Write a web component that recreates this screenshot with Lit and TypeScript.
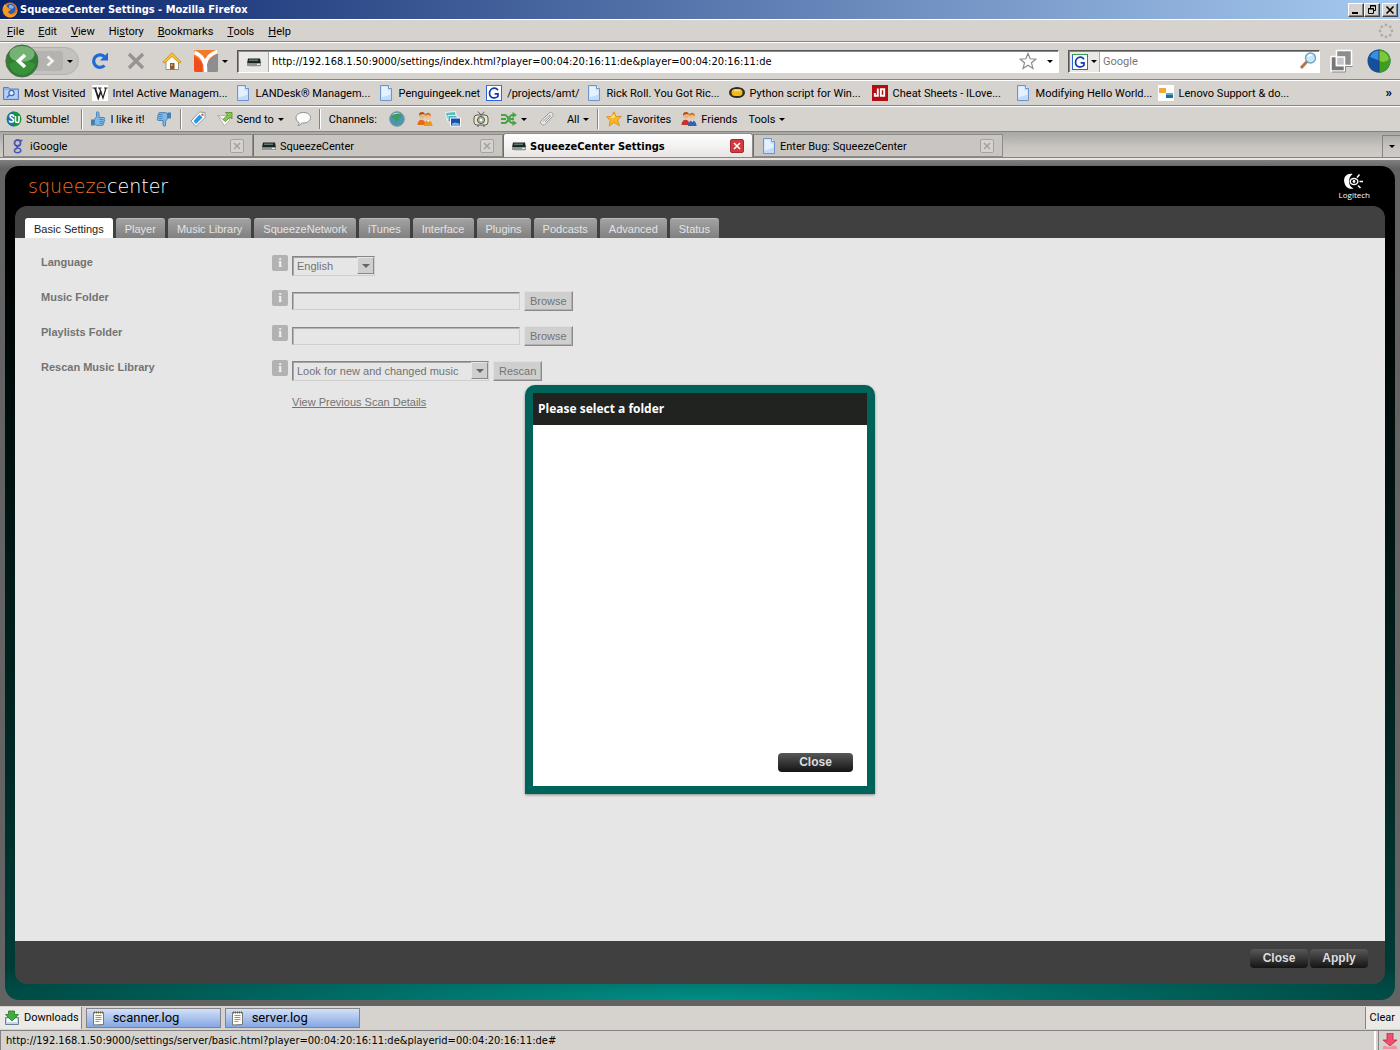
import { LitElement, html, css, svg, nothing, TemplateResult } from "lit";
import { customElement, state } from "lit/decorators.js";
import { classMap } from "lit/directives/class-map.js";

const box = (size: number, view: string, body: unknown) =>
  html`<svg width=${size} height=${size} viewBox=${view} aria-hidden="true">${body}</svg>`;
const i16 = (body: unknown) => box(16, "0 0 16 16", body);

const pageIcon = i16(svg`
  <path d="M2.500 .5h8l3 3v12h-11z" fill="#c3dbfa" stroke="#6f93cc"/>
  <path d="M3.500 1.500h6v4h3v4l-9 3z" fill="#e6f1fe"/>
  <path d="M10.500 .5v3h3" fill="#fff" stroke="#6f93cc"/>`);
const deviceIcon = i16(svg`
  <path d="M2 4.500h12l1 5H1z" fill="#1d2422"/><path d="M3 5.500h9v1.500H3z" fill="#5d7c74"/>
  <path d="M1 9.500h14v2.500H1z" fill="#8f9391"/><path d="M3 12h11v1H3z" fill="#cfcfcf"/>
  <path d="M11 10.300h3" stroke="#fff"/>`);
const gIcon = i16(svg`
  <path d="M0 0h16v16H0z" fill="#fff"/>
  <path d="M.5 16V.5" stroke="#2b62d6" /><path d="M0 .5h16" stroke="#2fa04a"/>
  <path d="M15.500 0v16" stroke="#d23a2e"/><path d="M0 15.500h16" stroke="#2b62d6"/>
  <path d="M12 5.200C10.500 2.800 7 2.500 5 4.500s-2 5.500 0 7.300 5.500 1.200 7-.6V8.800H8.600" fill="none" stroke="#1338b0" stroke-width="1.700"/>`);
const people = (a: string, b: string) => i16(svg`
  <circle cx="5" cy="4.500" r="3" fill="#f2b27a"/><path d="M2 4.500C1.500 0 8 0 8 3.500 6 2.500 4 3 2 4.500z" fill="#a4521b"/>
  <circle cx="11" cy="5" r="3" fill="#f5bd87"/><path d="M8 5C8 .5 14 .5 14 5 12 3.500 10 3.500 8 5z" fill="#c8772a"/>
  <path d="M.5 14c0-7 8-7 8 0z" fill=${a}/><path d="M7 15c0-7.500 8.500-7.500 8.500 0z" fill=${b}/>
  <path d="M10 9.200l1.300 2 1.300-2z" fill="#fff"/>`);
const thumb = svg`
  <path d="M1 8.500h3.500v6H1z" fill="#3f80b8"/>
  <path d="M4.500 8.500L6.500 5.500V1.500C6.500 .3 9 .5 9 2.500V6.500h4.500c1.500 0 1.500 1.700.5 2 1 .4.800 1.800-.2 2 .8.500.5 1.700-.5 1.900.6.700.2 2-1 2H6.500l-2-1z" fill="#7db9e3" stroke="#3873aa" stroke-width=".8"/>
  <path d="M9.500 8.500h4M9.500 10.500h4M9.500 12.400h3.500" stroke="#3873aa" stroke-width=".7"/>`;
const noteIcon = i16(svg`
  <path d="M2.500 2.500h10v12l-10 .5z" fill="#fffef4" stroke="#777"/>
  <path d="M3 2.500h10" stroke="#6b5a32" stroke-width="2" stroke-dasharray="1 1"/>
  <path d="M4.500 5.500h6M4.500 7.500h6M4.500 9.500h6M4.500 11.500h4" stroke="#777" stroke-width=".8"/>`);

const icons: Record<string, TemplateResult> = {
  page: pageIcon,
  device: deviceIcon,
  g: gIcon,
  note: noteIcon,
  firefox: i16(svg`
    <circle cx="8" cy="8" r="7.500" fill="#e8731a"/><circle cx="8.500" cy="7" r="5" fill="#2c5fb4"/>
    <path d="M7 3.500c2-1 4 0 5 1.500l-2 2-3-1z" fill="#7cb2ea"/>
    <path d="M1 5C0 9 2 14.500 8 15.500c4.500 0 7.500-3.500 7.500-8-1 4-3 5-5.500 5-3 0-4-2-3.500-3.500l2.500-1c-.5-2-3.500-1-4-4z" fill="#f39a22"/>
    <path d="M1.300 5L3 2l1 2.500" fill="#f7c341"/>`),
  visited: i16(svg`
    <path d="M.5 2.500h5l1 1.500h9v10.500H.5z" fill="#8fb5ee" stroke="#5580c0"/>
    <path d="M1.500 5h13v8.500h-13z" fill="#b4d0f6"/>
    <circle cx="8.500" cy="8" r="2.600" fill="#e2eefd" stroke="#3f6cb4" stroke-width="1.200"/><path d="M6.500 10l-2.500 2.500" stroke="#3f6cb4" stroke-width="1.400"/>`),
  wiki: i16(svg`<path d="M0 0h16v16H0z" fill="#fff"/>
    <path d="M3 3l3.300 10L9 6" fill="none" stroke="#222" stroke-width="1.800"/>
    <path d="M7.500 3L11 13l3-10M.5 3h4.500M6 3h3.500M12 3h3.500" fill="none" stroke="#222" stroke-width="1.200"/>`),
  python: i16(svg`<ellipse cx="8" cy="7.500" rx="8" ry="5.600" fill="#2c2c22"/>
    <rect x="2.500" y="4" width="11" height="7" rx="3.500" fill="#f3b81a"/><path d="M5 5.500h6" stroke="#ffe37c" stroke-width="1.500"/>`),
  jd: i16(svg`<path d="M0 0h16v16H0z" fill="#b20d12"/>
    <path d="M5.800 3.500v7.200H2.800V8M8.800 4.300h3.400v6.400H8.800z" fill="none" stroke="#fff" stroke-width="1.900"/>`),
  lenovo: i16(svg`<path d="M0 0h16v16H0z" fill="#fff"/><path d="M1 3h7v5H1z" fill="#f2a93a"/><path d="M8 8h7v5H8z" fill="#176f9c"/><path d="M8 8h7v2H8z" fill="#5fa9c8"/>`),
  stumble: i16(svg`<circle cx="8" cy="8" r="7.500" fill="#17943a"/><path d="M1 8a7 7 0 0 1 7-7.500v15A7 7 0 0 1 1 8z" fill="#1d6fb8"/>
    <path d="M7.500 6V5c0-1.500-3.500-1.500-3.500.3C4 7.500 7.500 7 7.500 9.500c0 2-4 2-4 0M9.500 5v5c0 2 3.500 2 3.500 0V5" fill="none" stroke="#fff" stroke-width="1.600"/>`),
  up: i16(thumb),
  down: i16(svg`<g transform="rotate(180 8 8)">${thumb}</g>`),
  tag: i16(svg`<path d="M1 10L9.500 1l5.500.5v5L6 15.500z" fill="#fff" stroke="#8899a8"/><path d="M3.500 10l6-6.500 3 3-6.500 6.500z" fill="#2f95dc"/><circle cx="12.500" cy="3.700" r="1.200" fill="#d2692a"/>`),
  send: i16(svg`<path d="M.5 4.500h12v5l-5 5.500z" fill="#f6f6f0" stroke="#b5b5a8"/><path d="M1 5l6 4 5-4" fill="none" stroke="#b5b5a8"/>
    <path d="M6 8.500L10.500 4 8.500 1.500h6.500V8l-2-2-4.500 4.500z" fill="#8cc252" stroke="#4d8d22" stroke-width=".8"/>`),
  bubble: i16(svg`<path d="M8.500 1.500c4 0 7 2.200 7 5.200s-3 5.300-7 5.300c-.7 0-1.500 0-2 .2-.5 1.300-2 2.300-3.500 2.300 1-.8 1.200-2 1-3C2.300 10.500 1 8.800 1 6.700c0-3 3.500-5.200 7.500-5.200z" fill="#fcfcfc" stroke="#8d8d8d"/>`),
  globe: i16(svg`<circle cx="8" cy="8" r="7.300" fill="#4a97b5" stroke="#7e949c"/><path d="M3 5c2-3 5-3.500 8-2.500l1.500 3L10 7l-1 3-2 2-1-4-3-1z" fill="#3e9b62"/><path d="M3 4c2-2.500 6-3 8-1.500-3-.3-6 .2-8 1.500z" fill="#dff1f6"/>`),
  peopleOrange: people("#e06c1c", "#f29422"),
  peopleBlue: people("#c8342c", "#2b64b8"),
  photos: i16(svg`<path d="M.5 1.500l10-1 .8 7-9.500 1z" fill="#59bdb8" stroke="#fff" stroke-width=".8"/><path d="M3 4.500h9V11H3z" fill="#4aa9cf" stroke="#fff" stroke-width=".8"/><path d="M5.500 7h10v8h-10z" fill="#1c4fa4" stroke="#fff"/><path d="M7 12.500l3-1 4.500 1v1.500H7z" fill="#78b3ea"/>`),
  tv: i16(svg`<path d="M5 .5L8 4l3.500-3" fill="none" stroke="#555"/><rect x="1" y="4" width="14" height="10" rx="3" fill="#e9e6cf" stroke="#5d5b4c"/><circle cx="8" cy="9" r="3.600" fill="#a7b7aa" stroke="#5d5b4c"/><circle cx="8" cy="9" r="1.300" fill="#fff"/><path d="M4 15h2M10 15h2" stroke="#555"/>`),
  shuffle: i16(svg`<path d="M0 4h4c3 0 4 8 7 8h1M0 8h5M9 8h4M0 12h4c3 0 4-8 7-8h1" fill="none" stroke="#49a447" stroke-width="2.200"/><path d="M11.500 1l4.500 3-4.500 3zM11.500 9l4.500 3-4.500 3z" fill="#49a447"/>`),
  clip: i16(svg`<path d="M1.500 10.500L10 2c2-2 5.500 1 3.500 3.500L6.500 13c-2 2-5 .5-5-2.500z" fill="#e9e9e9" stroke="#9a9a9a"/><path d="M4 10.500l6-6c1-.8 2 .3 1.200 1.200L6 11" fill="none" stroke="#9a9a9a"/>`),
  star: i16(svg`<path d="M8 .8l2 4.700 5.500-.2-4 3.700 2 5.700L8 11.500 3.200 15l1-5.500L.6 5.800l5-.3z" fill="#fbb724" stroke="#d98712" stroke-width=".8"/><path d="M8 3l1.200 3.500-5 .3z" fill="#ffe48a"/>`),
  google: i16(svg`<circle cx="6.500" cy="5" r="3" fill="none" stroke="#4a56b4" stroke-width="1.800"/><path d="M9 2.500h2.500M7 8c-3 .2-1 2 .5 2.300 3.500.5 3 4.400-.8 4.400-4.300 0-4.300-3.700-.6-4.200" fill="none" stroke="#4a56b4" stroke-width="1.500"/>`),
  dl: i16(svg`<path d="M1.500 7.500h13v7h-13z" fill="#c9d6e6" stroke="#6c7f98"/><path d="M3 9h10v3H3z" fill="#f4f7fb"/><path d="M4.500 1h6v3.500h4L8 11 1.500 4.500h3z" fill="#3fae3d" stroke="#1f7c22" stroke-width=".8"/>`),
  reload: box(20, "0 0 20 20", svg`<path d="M14.500 14.500A6.300 6.300 0 1 1 14.200 5.500" fill="none" stroke="#2468d4" stroke-width="3.200"/><path d="M18 1.500v8h-8z" fill="#2468d4"/>`),
  stop: box(20, "0 0 20 20", svg`<path d="M3 3l14 14M17 3L3 17" stroke="#969492" stroke-width="3.400"/>`),
  home: box(20, "0 0 20 20", svg`<path d="M4 10v8.500h12.500V10L10 4z" fill="#fff" stroke="#9a9384"/><path d="M.8 11L10 1.800 19.200 11l-2 .9L10 5.500 2.800 12z" fill="#f8c435" stroke="#c98d17" stroke-width=".9"/><path d="M8 12h4.500v6.500H8z" fill="#94592b"/><path d="M9 13h1.500v2H9z" fill="#dfa868"/>`),
  yoono: box(24, "0 0 24 24", svg`<rect width="24" height="22" y="1" rx="2" fill="#f3792b"/><path d="M12 23V14L24 3v18q0 2-2 2z" fill="#8e8e90"/><path d="M0 7l9 7-1 9H2q-2 0-2-2z" fill="#f04d1a"/><path d="M.5 3.500C6 5.500 12 10 11.500 23M23.500 2.500C17 4.500 12 9 11 16" fill="none" stroke="#fff" stroke-width="3.600"/>`),
  search: box(18, "0 0 18 18", svg`<circle cx="11.500" cy="6" r="5" fill="#c8e8fa" stroke="#6fa2c8" stroke-width="1.400"/><path d="M9 5a3 3 0 0 1 4-2" fill="none" stroke="#fff" stroke-width="1.500"/><path d="M8 9.500L2 16" stroke="#b5754a" stroke-width="3"/>`),
  bookmark: box(18, "0 0 18 18", svg`<path d="M9 1.500l2.200 5.300 5.600.4-4.300 3.600 1.400 5.600L9 13.300l-4.900 3.100 1.400-5.600L1.200 7.200l5.600-.4z" fill="#fdfdfd" stroke="#8a8a8a" stroke-width="1.200"/>`),
  windows: box(24, "0 0 24 24", svg`<path d="M2 7.500h13.500V22H2z" fill="#777" stroke="#fff" stroke-width="1.500"/><path d="M7.500 1.500h15v15h-15z" fill="#8d8d8d" stroke="#fff" stroke-width="1.500"/><path d="M7.500 8h8v8.500h-8z" fill="#c4c4c4" stroke="#fff" stroke-width="1.500"/><path d="M23.500 17.500H16.500V23H3" fill="none" stroke="#777" stroke-width=".8"/>`),
  orb: box(24, "0 0 24 24", svg`<circle cx="12" cy="12" r="11.500" fill="#164f9e"/><path d="M12 .5a11.500 11.500 0 0 1 0 23z" fill="#3e9e22"/><path d="M3 8c2-5 5-6 9-6.500v10z" fill="#3a8fdc"/><path d="M12 2c6 0 9 4 10 8-4 4-7 3-10 2z" fill="#7cc836"/><path d="M12 .5v23" stroke="#143a5a" stroke-width=".8"/>`),
  throbber: i16(svg`<g fill="#aeaba6"><circle cx="8" cy="2" r="1.400"/><circle cx="12.200" cy="3.800" r="1.400"/><circle cx="14" cy="8" r="1.400"/><circle cx="12.200" cy="12.200" r="1.400"/><circle cx="8" cy="14" r="1.400"/><circle cx="3.800" cy="12.200" r="1.400"/><circle cx="2" cy="8" r="1.400"/><circle cx="3.800" cy="3.800" r="1.400"/></g>`),
  back: box(34, "0 0 34 34", svg`<circle cx="17" cy="17" r="16" fill="#2f7d32" stroke="#4b6b4c"/><ellipse cx="17" cy="10" rx="12.500" ry="8" fill="#8cc48c" opacity=".75"/><path d="M4 20c6-4 20-4 26 0-2 7-7 11-13 11S6 27 4 20z" fill="#3fa03f" opacity=".6"/><path d="M20 11l-6.500 6 6.500 6" fill="none" stroke="#fff" stroke-width="3.600"/>`),
  fwd: i16(svg`<path d="M5.500 3.500L10.500 8l-5 4.500" fill="none" stroke="#f3f3f3" stroke-width="2.600"/>`),
  plugin: i16(svg`<path d="M5 0h6v7h4L8 13 1 7h4z" fill="#f0506c" stroke="#c22744" stroke-width=".8"/><path d="M1 14c3-3 4 1 7 0s4-3 7 0v2H1z" fill="#f3909f"/>`),
};

interface Tool { icon?: string; label?: string; menu?: boolean; sep?: boolean; }

const MENUS = ["File", "Edit", "View", "History", "Bookmarks", "Tools", "Help"];
const MENU_KEYS = [0, 0, 0, 2, 0, 0, 0];
const BOOKMARKS: [string, string, boolean][] = [
  ["visited", "Most Visited", false],
  ["wiki", "Intel Active Managem...", true],
  ["page", "LANDesk® Managem...", true],
  ["page", "Penguingeek.net", false],
  ["g", "/projects/amt/", false],
  ["page", "Rick Roll. You Got Ric...", true],
  ["python", "Python script for Win...", true],
  ["jd", "Cheat Sheets - ILove...", true],
  ["page", "Modifying Hello World...", true],
  ["lenovo", "Lenovo Support & do...", true],
];
const TOOLS: Tool[] = [
  { icon: "stumble", label: "Stumble!" }, { sep: true },
  { icon: "up", label: "I like it!" }, { icon: "down" }, { sep: true },
  { icon: "tag" }, { icon: "send", label: "Send to", menu: true }, { icon: "bubble" }, { sep: true },
  { label: "Channels:" }, { icon: "globe" }, { icon: "peopleOrange" }, { icon: "photos" }, { icon: "tv" },
  { icon: "shuffle", menu: true }, { icon: "clip" }, { label: "All", menu: true }, { sep: true },
  { icon: "star", label: "Favorites" }, { icon: "peopleBlue", label: "Friends" }, { label: "Tools", menu: true },
];
const PAGES = [
  { icon: "google", title: "iGoogle" },
  { icon: "device", title: "SqueezeCenter" },
  { icon: "device", title: "SqueezeCenter Settings", active: true },
  { icon: "page", title: "Enter Bug: SqueezeCenter" },
];
const SECTIONS = ["Basic Settings", "Player", "Music Library", "SqueezeNetwork", "iTunes", "Interface", "Plugins", "Podcasts", "Advanced", "Status"];

const shared = css`
  * { box-sizing: border-box; }
  svg { display: block; flex: none; }
  button, input, select { font: inherit; color: inherit; margin: 0; border-radius: 0; }
  button { background: none; border: 0; padding: 0; white-space: nowrap; }
  .caret { flex: none; width: 0; height: 0; border: 3px solid transparent; border-top-color: #000; border-bottom: 0; }
`;

@customElement("browser-chrome")
class BrowserChrome extends LitElement {
  static styles = [shared, css`
    :host { display: block; font: 11px/14px Roboto, Tahoma, sans-serif; color: #000; background: #d6d3ce; }
    .title { display: flex; align-items: center; height: 19px; padding: 0 2px; color: #fff;
      background: linear-gradient(90deg, #0a246a, #a6caf0); font: bold 11px/18px "DejaVu Sans Condensed", Tahoma, sans-serif; }
    .title .name { flex: 1; margin-left: 2px; }
    .win { width: 16px; height: 14px; display: grid; place-items: center; background: #d6d3ce;
      border: 1px solid; border-color: #fff #404040 #404040 #fff; box-shadow: inset -1px -1px #848284; }
    .win.last { margin-left: 2px; }
    .row { display: flex; align-items: center; border-top: 1px solid #fff; border-bottom: 1px solid #848284; }
    .menus { height: 23px; padding: 0 6px 0 0; }
    .menus button { padding: 2px 7px 0; }
    .menus .space { flex: 1; }
    .nav { height: 38px; padding: 0 9px 0 5px; }
    .history { display: flex; align-items: center; height: 28px; width: 74px; border-radius: 14px; background: #c4c2be;
      border: 1px solid #b3b1ad; gap: 4px; }
    .history .back { margin-left: -1px; z-index: 1; }
    .history .fwd { margin-left: -10px; width: 30px; height: 20px; display: grid; place-items: center end; padding-right: 5px; background: #b5b3b0; border-radius: 0 4px 4px 0; }
    .acts { display: flex; align-items: center; gap: 16px; margin: 0 12px 0 11px; }
    .yoono { display: flex; align-items: center; gap: 4px; }
    .field { display: flex; align-items: stretch; height: 23px; background: #fff; border: 1px solid; border-color: #555 #fff #fff #555;
      box-shadow: inset 1px 1px #8a8a8a; align-self: center; }
    .url { flex: 1; margin-left: 9px; }
    .find { flex: none; width: 252px; margin: 0 9px; }
    .favicon { display: flex; align-items: center; justify-content: center; gap: 3px; width: 30px; background: #ebe9e6; border-right: 1px solid #aaa; margin: 1px 0 0 1px; }
    .field input { flex: 1; min-width: 0; border: 0; background: none; outline: 0; padding: 2px 3px 0; }
    .url input { font-family: "DejaVu Sans Condensed", Tahoma, sans-serif; }
    .find input::placeholder { color: #777; opacity: 1; }
    .end { display: flex; align-items: center; gap: 10px; padding-right: 5px; }
    .find .end { padding-right: 2px; }
    .extras { display: flex; align-items: center; gap: 14px; }
    .marks { height: 26px; padding: 0 8px 0 3px; }
    .marks a { display: flex; align-items: center; gap: 5px; color: inherit; text-decoration: none; white-space: nowrap; padding-right: 6px; }
    .marks a.long { flex: 0 1 143px; padding: 0; overflow: hidden; }
    .marks a span, .tools .item span { padding-top: 2px; }
    .marks .more { margin-left: auto; font-size: 13px; font-weight: bold; }
    .tools { height: 26px; padding: 0 6px; }
    .tools .item { display: flex; align-items: center; gap: 4px; padding: 0 5px; }
    .tools .item.bare { padding: 0 6px; }
    .tools .item:first-child { padding: 0 10px 0 0; }
    .sep { width: 2px; height: 20px; border-left: 1px solid #848284; border-right: 1px solid #fff; margin: 0 2px; }
    .pages { display: flex; align-items: flex-end; height: 26px; padding-left: 3px; background: linear-gradient(#a9a7a4, #c8c5c1 60%, #cfccc8); border-bottom: 1px solid #848284; }
    .page { flex: 0 1 250px; display: flex; align-items: center; gap: 3px; height: 23px; padding: 0 8px 0 7px;
      border: 1px solid #8e8c89; border-left-color: #6f6d6b; background: #c9c6c2; min-width: 0; }
    .page.active { background: linear-gradient(#fff, #e9e4e4); height: 24px; border-radius: 3px 3px 0 0; border-bottom: 0;
      font: bold 11px/14px "DejaVu Sans Condensed", Tahoma, sans-serif; }
    .page .name { flex: 1; white-space: nowrap; padding-top: 2px; }
    .x { width: 14px; height: 14px; display: grid; place-items: center; border: 1px solid #a5a3a0; border-radius: 2px; color: #a5a3a0; background: #d6d3ce; }
    .active .x { background: #d23a3f; color: #fff; border-color: #a82a30; }
    .list { width: 18px; height: 22px; margin-left: auto; display: grid; place-items: center; border-left: 1px solid #848284; border-top: 1px solid #848284; }
    .edge { height: 2px; background: #e8e4e2; }
  `];

  private tool(t: Tool) {
    if (t.sep) return html`<span class="sep"></span>`;
    return html`<button class=${classMap({ item: true, bare: !t.icon || !t.label })} aria-label=${t.label ?? t.icon ?? ""}>
      ${t.icon ? icons[t.icon] : nothing}${t.label ? html`<span>${t.label}</span>` : nothing}${t.menu ? html`<i class="caret"></i>` : nothing}
    </button>`;
  }

  render() {
    const cross = html`<svg width="8" height="8" viewBox="0 0 8 8"><path d="M1 1l6 6M7 1L1 7" stroke="currentColor" stroke-width="1.600"/></svg>`;
    return html`
      <header class="title">
        ${icons.firefox}<span class="name">SqueezeCenter Settings - Mozilla Firefox</span>
        <button class="win" aria-label="Minimize"><svg width="10" height="10" viewBox="0 0 10 10"><path d="M1 8h6" stroke="#000" stroke-width="2"/></svg></button>
        <button class="win" aria-label="Restore"><svg width="10" height="10" viewBox="0 0 10 10"><path d="M3.500 3V.5h5v5H6.500M3 1h6M1.500 3.500h5v5h-5zM1 4h6" fill="none" stroke="#000"/></svg></button>
        <button class="win last" aria-label="Close window"><svg width="10" height="10" viewBox="0 0 10 10"><path d="M1.500 1.500l7 7M8.500 1.500l-7 7" stroke="#000" stroke-width="1.600"/></svg></button>
      </header>
      <nav class="row menus">
        ${MENUS.map((m, n) => { const k = MENU_KEYS[n]; return html`<button>${m.slice(0, k)}<u>${m[k]}</u>${m.slice(k + 1)}</button>`; })}
        <span class="space"></span>${icons.throbber}
      </nav>
      <div class="row nav">
        <div class="history">
          <button class="back" aria-label="Back">${icons.back}</button>
          <button class="fwd" aria-label="Forward">${icons.fwd}</button>
          <i class="caret"></i>
        </div>
        <div class="acts">
          <button aria-label="Reload">${icons.reload}</button>
          <button aria-label="Stop">${icons.stop}</button>
          <button aria-label="Home">${icons.home}</button>
        </div>
        <button class="yoono" aria-label="Sidebar">${icons.yoono}<i class="caret"></i></button>
        <div class="field url">
          <span class="favicon">${icons.device}</span>
          <input aria-label="Address" .value=${"http://192.168.1.50:9000/settings/index.html?player=00:04:20:16:11:de&player=00:04:20:16:11:de"}>
          <span class="end">${icons.bookmark}<i class="caret"></i></span>
        </div>
        <div class="field find">
          <span class="favicon">${icons.g}<i class="caret"></i></span>
          <input type="search" aria-label="Search" placeholder="Google">
          <span class="end">${icons.search}</span>
        </div>
        <div class="extras">
          <button aria-label="Windows">${icons.windows}</button>
          <button aria-label="Sync">${icons.orb}</button>
        </div>
      </div>
      <div class="row marks">
        ${BOOKMARKS.map(([icon, label, long]) => html`<a href="#" class=${classMap({ long })}>${icons[icon]}<span>${label}</span></a>`)}
        <button class="more">»</button>
      </div>
      <div class="row tools">${TOOLS.map((t) => this.tool(t))}</div>
      <div class="pages">
        ${PAGES.map((p) => html`<div class=${classMap({ page: true, active: !!p.active })}>
          ${icons[p.icon]}<span class="name">${p.title}</span><button class="x" aria-label="Close tab">${cross}</button></div>`)}
        <button class="list" aria-label="List tabs"><i class="caret"></i></button>
      </div>
      <div class="edge"></div>`;
  }
}

@customElement("settings-page")
class SettingsPage extends LitElement {
  @state() private section = SECTIONS[0];

  static styles = [shared, css`
    :host { display: grid; position: relative; font: 11px/14px "Liberation Sans", Arial, sans-serif; color: #737373;
      background: linear-gradient(#808280, #626362 8px); padding: 6px 5px; }
    .shell { display: flex; flex-direction: column; border-radius: 14px; padding: 0 10px 16px; min-width: 0;
      background: radial-gradient(ellipse 60% 60px at 50% 100%, #008f86, #00877e00), linear-gradient(#000 8%, #001f1c 60%, #003d38 98%); }
    .brand { display: flex; justify-content: space-between; align-items: center; height: 40px; padding: 0 15px 0 13px; }
    .logo { font: 200 19px/20px "DejaVu Sans", Verdana, sans-serif; color: #fff; }
    .logo em { font-style: normal; color: #f0702c; }
    .maker { display: grid; justify-items: center; color: #fff; font: 8px/9px "Open Sans", sans-serif; }
    .panel { flex: 1; display: flex; flex-direction: column; background: #404040; border-radius: 12px; overflow: hidden; }
    .tabs { display: flex; gap: 3px; padding: 12px 10px 0; }
    .tabs button { height: 20px; padding: 1px 9px 0; color: #e4e4e4; border-radius: 3px 3px 0 0; border-top: 1px solid #b9b9b9;
      background: linear-gradient(#a2a2a2, #808080); }
    .tabs button.on { background: #fff; color: #222; border-color: #fff; }
    .body { flex: 1; background: #e6e6e6; padding: 17px 26px; display: flex; flex-direction: column; gap: 14px; }
    .line { display: grid; grid-template-columns: 227px 16px 1fr; column-gap: 4px; height: 21px; }
    .line .name { font-weight: bold; }
    .info { width: 16px; height: 16px; border-radius: 2px; background: #b2b2b2; color: #f4f4f4; font: bold 13px/16px "Liberation Serif", serif; text-align: center; }
    .ctl { display: flex; align-items: center; gap: 4px; }
    .ctl input { width: 228px; height: 18px; background: #e6e6e6; border: 1px solid; border-color: #868686 #cfcfcf #cfcfcf #868686; box-shadow: inset 1px 1px #b4b4b4; }
    .pick { display: grid; align-items: center; }
    .pick select, .pick .drop { grid-area: 1 / 1; }
    .pick select { appearance: none; height: 20px; background: #e6e6e6; padding: 0 20px 0 4px; border: 1px solid; outline: 0;
      border-color: #868686 #cfcfcf #cfcfcf #868686; box-shadow: inset 1px 1px #a4a4a4; }
    .pick .short { width: 83px; }
    .pick .wide { width: 197px; }
    .drop { justify-self: end; margin-right: 1px; width: 17px; height: 17px; display: grid; place-items: center; background: #cfcfcf; pointer-events: none;
      border: 1px solid; border-color: #e6e6e6 #888 #888 #e6e6e6; }
    .drop .caret { border-width: 4px 4px 0; border-top-color: #666; }
    .old { height: 20px; padding: 0 5px; background: #cfcfcf; border: 1px solid; border-color: #e0e0e0 #8b8b8b #8b8b8b #e0e0e0; box-shadow: inset -1px -1px #b0b0b0; }
    .link { color: inherit; text-decoration: underline; justify-self: start; grid-column: 3; }
    .foot { display: flex; justify-content: flex-end; gap: 2px; height: 43px; padding: 8px 17px 0; }
    .dark { height: 19px; width: 58px; border-radius: 4px; color: #ddd; font: bold 12px/19px "Liberation Sans", Arial, sans-serif;
      background: linear-gradient(#585858, #141414); }
    .layer { position: absolute; inset: 13px 0 0; display: grid; place-items: center; pointer-events: none; }
    .dialog { width: 350px; height: 409px; display: flex; flex-direction: column; border: 8px solid #00635a; border-radius: 10px 10px 0 0;
      background: #fff; box-shadow: 0 1px 3px #0006; pointer-events: auto; }
    .dialog h2 { margin: 0; height: 32px; padding: 0 5px; background: #212321; color: #fff; font: bold 12px/31px "Open Sans", Tahoma, sans-serif; }
    .files { flex: 1; }
    .dialog footer { display: flex; justify-content: flex-end; padding: 0 14px; }
    .dialog .dark { width: 75px; margin-bottom: 14px; }
  `];

  private row(id: string, name: string, control: unknown) {
    return html`<div class="line"><label class="name" for=${id}>${name}</label><span class="info">i</span><div class="ctl">${control}</div></div>`;
  }

  render() {
    const drop = html`<span class="drop"><i class="caret"></i></span>`;
    return html`
      <div class="shell">
        <div class="brand">
          <div class="logo"><em>squeeze</em>center</div>
          <div class="maker">
            <svg width="24" height="17" viewBox="0 0 24 17"><path d="M10.500 1C4 0 1 5 2.500 10c1 4.500 5 6.500 9 5.500C8 13.500 7 11 7 8.500S8 3 10.500 1z" fill="#fff"/>
              <ellipse cx="12" cy="8.500" rx="3.800" ry="3" fill="none" stroke="#fff" stroke-width="1.400"/><circle cx="12" cy="8.500" r="1.400" fill="#fff"/>
              <path d="M15 4.500l2.500-3M17.500 8.500H21M16 12.500l2.500 2.500" stroke="#fff" stroke-width="1.500"/></svg>
            <span>Logitech</span>
          </div>
        </div>
        <div class="panel">
          <div class="tabs">${SECTIONS.map((s) => html`<button class=${classMap({ on: s === this.section })} @click=${() => (this.section = s)}>${s}</button>`)}</div>
          <div class="body">
            ${this.row("lang", "Language", html`<span class="pick"><select id="lang" class="short"><option>English</option></select>${drop}</span>`)}
            ${this.row("music", "Music Folder", html`<input id="music"><button class="old">Browse</button>`)}
            ${this.row("lists", "Playlists Folder", html`<input id="lists"><button class="old">Browse</button>`)}
            ${this.row("scan", "Rescan Music Library", html`<span class="pick"><select id="scan" class="wide"><option>Look for new and changed music</option></select>${drop}</span><button class="old">Rescan</button>`)}
            <div class="line"><a class="link" href="#">View Previous Scan Details</a></div>
          </div>
          <div class="foot"><button class="dark">Close</button><button class="dark">Apply</button></div>
        </div>
      </div>
      <div class="layer">
        <section class="dialog" role="dialog" aria-labelledby="dlg">
          <h2 id="dlg">Please select a folder</h2>
          <div class="files"></div>
          <footer><button class="dark">Close</button></footer>
        </section>
      </div>`;
  }
}

@customElement("browser-footer")
class BrowserFooter extends LitElement {
  static styles = [shared, css`
    :host { display: block; font: 11px/14px Roboto, Tahoma, sans-serif; color: #000; background: #d6d3ce; }
    .downloads { display: flex; align-items: center; height: 24px; gap: 4px; }
    .head { display: flex; align-items: center; gap: 4px; height: 22px; padding: 0 2px 0 4px; background: #eceae7; border-right: 1px solid #848284; }
    .file { display: flex; align-items: center; gap: 6px; width: 135px; height: 20px; padding: 0 4px; font-size: 13px;
      border: 1px solid #848284; background: linear-gradient(#d3e0f8, #84a7e3); }
    .clear { margin-left: auto; height: 22px; padding: 0 5px 0 4px; background: #eceae7; border-left: 1px solid #848284; }
    .status { display: flex; height: 20px; border-top: 1px solid #848284; }
    .msg { flex: 1; padding: 3px 5px 0; border-left: 1px solid #848284; border-right: 2px solid #fff; font-family: "DejaVu Sans Condensed", Tahoma, sans-serif; }
    .plug { width: 22px; display: grid; place-items: center; border-left: 1px solid #848284; margin-left: 2px; }
  `];

  render() {
    return html`
      <div class="downloads">
        <button class="head">${icons.dl}<span>Downloads</span></button>
        <button class="file">${icons.note}<span>scanner.log</span></button>
        <button class="file">${icons.note}<span>server.log</span></button>
        <button class="clear">Clear</button>
      </div>
      <div class="status">
        <span class="msg">http://192.168.1.50:9000/settings/server/basic.html?player=00:04:20:16:11:de&amp;playerid=00:04:20:16:11:de#</span>
        <span class="plug">${icons.plugin}</span>
      </div>`;
  }
}

@customElement("app-root")
class AppRoot extends LitElement {
  static styles = css`
    :host { display: flex; flex-direction: column; min-height: 100vh; }
    settings-page { flex: 1; }
  `;
  render() {
    return html`<browser-chrome></browser-chrome><settings-page></settings-page><browser-footer></browser-footer>`;
  }
}
